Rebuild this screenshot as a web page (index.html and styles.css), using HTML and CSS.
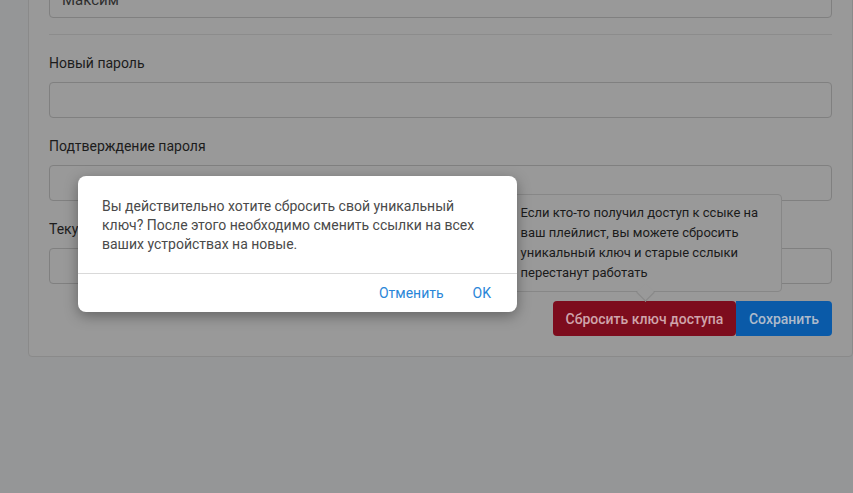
FILE: index.html
```html
<!DOCTYPE html>
<html lang="ru">
<head>
<meta charset="utf-8">
<link rel="stylesheet" href="styles.css">
</head>
<body>
<div class="page">
  <form class="card">
    <div class="field field-text">Максим</div>
    <hr class="divider">
    <div class="group">
      <label class="label">Новый пароль</label>
      <div class="field"></div>
    </div>
    <div class="group">
      <label class="label">Подтверждение пароля</label>
      <div class="field"></div>
    </div>
    <div class="group">
      <label class="label">Текущий пароль</label>
      <div class="field"></div>
    </div>
    <div class="actions">
      <div class="reset-wrap">
        <div class="tooltip">Если кто-то получил доступ к ссыке на ваш плейлист, вы можете сбросить уникальный ключ и старые сслыки перестанут работать</div>
        <button type="button" class="btn btn-danger">Сбросить ключ доступа</button>
      </div>
      <button type="button" class="btn btn-primary">Сохранить</button>
    </div>
  </form>
</div>
<div class="backdrop">
  <div class="dialog">
    <p class="dialog-text">Вы действительно хотите сбросить свой уникальный ключ? После этого необходимо сменить ссылки на всех ваших устройствах на новые.</p>
    <div class="dialog-footer">
      <button type="button" class="dialog-btn">Отменить</button>
      <button type="button" class="dialog-btn">OK</button>
    </div>
  </div>
</div>
</body>
</html>
```
FILE: styles.css
```css
* { box-sizing: border-box; }
html, body { margin: 0; padding: 0; }
body {
  width: 853px;
  height: 493px;
  overflow: hidden;
  background: #959697;
  font-family: Roboto, "Liberation Sans", sans-serif;
  position: relative;
}
.page {
  padding-left: 28px;
}
.card {
  width: 825px;
  margin-top: -39px;
  background: #999999;
  border: 1px solid #8a8a8a;
  border-radius: 4px;
  padding: 20px;
  display: flex;
  flex-direction: column;
}
.field {
  height: 36px;
  border: 1px solid #808080;
  border-radius: 4px;
  background: #999999;
}
.field-text {
  padding: 0 12px;
  line-height: 34px;
  font-size: 15px;
  color: #2e2e2e;
}
.divider {
  margin: 16px 0 18px;
  border: 0;
  border-top: 1px solid #8c8c8c;
  height: 0;
}
.group {
  display: flex;
  flex-direction: column;
  margin-bottom: 18px;
}
.label {
  font-size: 14px;
  line-height: 21px;
  color: #1c1c1c;
  margin-bottom: 8px;
}
.actions {
  display: flex;
  justify-content: flex-end;
  margin-top: -1px;
}
.reset-wrap {
  position: relative;
  display: flex;
}
.btn {
  height: 35px;
  border: 0;
  font-family: Roboto, "Liberation Sans", sans-serif;
  font-size: 14px;
  font-weight: 500;
  white-space: nowrap;
  padding: 0;
  cursor: pointer;
}
.btn-danger {
  width: 183px;
  background: #7d0c1d;
  color: #cfa4ab;
  border-radius: 4px;
}
.btn-primary {
  width: 96px;
  background: #0a5aa8;
  color: #aebbcb;
  border-radius: 0 4px 4px 0;
}
.tooltip {
  position: absolute;
  left: 50%;
  bottom: 44px;
  transform: translateX(-50%);
  width: 274px;
  padding: 8px 12px;
  background: #999999;
  border: 1px solid #878787;
  border-radius: 4px;
  font-size: 13px;
  line-height: 20px;
  color: #1b1b1b;
}
.tooltip::after {
  content: "";
  position: absolute;
  left: 50%;
  bottom: -8px;
  width: 12px;
  height: 12px;
  margin-left: -6px;
  background: #999999;
  border-right: 1px solid #878787;
  border-bottom: 1px solid #878787;
  transform: rotate(45deg);
}
.backdrop {
  position: absolute;
  inset: 0;
}
.dialog {
  position: absolute;
  left: 78px;
  top: 176px;
  width: 439px;
  background: #ffffff;
  border-radius: 8px;
  box-shadow: 0 4px 14px rgba(0, 0, 0, 0.35);
  font-family: Roboto, "Liberation Sans", sans-serif;
}
.dialog-text {
  margin: 0;
  padding: 21px 24px 19px;
  font-size: 14px;
  line-height: 19px;
  color: #4a4a4a;
}
.dialog-footer {
  border-top: 1px solid #d9d9d9;
  height: 39px;
  display: flex;
  justify-content: flex-end;
  align-items: center;
  gap: 29px;
  padding-right: 26px;
}
.dialog-btn {
  border: 0;
  background: none;
  padding: 0;
  font-family: Roboto, "Liberation Sans", sans-serif;
  font-size: 14px;
  color: #2a86d8;
  cursor: pointer;
}
```
